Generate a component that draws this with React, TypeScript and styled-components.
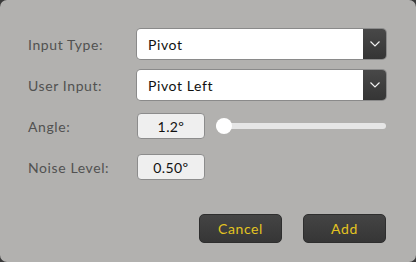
import styled, { createGlobalStyle } from "styled-components";

const GlobalStyle = createGlobalStyle`
    html, body {
        margin: 0;
        padding: 0;
        background: #3a3a3a;
    }
    body {
        font-family: "Lato", "Liberation Sans", sans-serif;
    }
`;

const Dialog = styled.div`
    width: 416px;
    height: 262px;
    box-sizing: border-box;
    background: #b2b1af;
    border-radius: 7px;
    padding: 29px 30px 19px 28px;
    display: flex;
    flex-direction: column;
`;

const Form = styled.div`
    display: flex;
    flex-direction: column;
    gap: 11px;
`;

const Row = styled.div`
    display: flex;
    align-items: center;
    height: 30px;
`;

const Label = styled.span`
    width: 109px;
    flex-shrink: 0;
    font-size: 14px;
    color: #515151;
    letter-spacing: 0.6px;
`;

const Select = styled.div`
    flex: 1;
    height: 30px;
    display: flex;
    box-sizing: border-box;
    border-radius: 4px;
    overflow: hidden;
    box-shadow: 0 0 0 1px #8a8a8a;
`;

const SelectValue = styled.div`
    flex: 1;
    background: #ffffff;
    display: flex;
    align-items: center;
    padding-left: 11px;
    font-size: 14px;
    color: #111;
    letter-spacing: 0.6px;
`;

const SelectButton = styled.div`
    width: 23px;
    background: linear-gradient(#484848, #353535);
    display: flex;
    align-items: center;
    justify-content: center;
`;

const NumberBox = styled.div`
    width: 68px;
    height: 26px;
    box-sizing: border-box;
    background: #efefef;
    border: 1px solid #8c8c8c;
    border-radius: 4px;
    display: flex;
    align-items: center;
    justify-content: center;
    font-size: 14px;
    color: #111;
    letter-spacing: 0.4px;
`;

const Slider = styled.div`
    flex: 1;
    margin-left: 11px;
    height: 20px;
    position: relative;
    display: flex;
    align-items: center;
`;

const Track = styled.div`
    flex: 1;
    height: 6px;
    background: #e6e6e6;
    border-radius: 3px;
`;

const Thumb = styled.div`
    position: absolute;
    left: 0;
    top: 2px;
    width: 16px;
    height: 16px;
    border-radius: 50%;
    background: #ffffff;
`;

const Footer = styled.div`
    margin-top: auto;
    display: flex;
    justify-content: flex-end;
    gap: 21px;
`;

const Button = styled.button`
    width: 83px;
    height: 29px;
    border: 1px solid #2e2e2e;
    border-radius: 5px;
    background: linear-gradient(#444444, #363636);
    color: #e3c421;
    font-family: inherit;
    font-size: 14px;
    letter-spacing: 0.6px;
    padding: 0;
`;

function Chevron() {
    return (
        <svg width="12" height="8" viewBox="0 0 12 8">
            <path d="M1.5 1.5 L6 6 L10.5 1.5" fill="none" stroke="#f0f0f0" strokeWidth="1.2" />
        </svg>
    );
}

export default function App() {
    return (
        <>
            <GlobalStyle />
            <Dialog>
                <Form>
                    <Row>
                        <Label>Input Type:</Label>
                        <Select>
                            <SelectValue>Pivot</SelectValue>
                            <SelectButton><Chevron /></SelectButton>
                        </Select>
                    </Row>
                    <Row>
                        <Label>User Input:</Label>
                        <Select>
                            <SelectValue>Pivot Left</SelectValue>
                            <SelectButton><Chevron /></SelectButton>
                        </Select>
                    </Row>
                    <Row>
                        <Label>Angle:</Label>
                        <NumberBox>1.2º</NumberBox>
                        <Slider>
                            <Track />
                            <Thumb />
                        </Slider>
                    </Row>
                    <Row>
                        <Label>Noise Level:</Label>
                        <NumberBox>0.50º</NumberBox>
                    </Row>
                </Form>
                <Footer>
                    <Button>Cancel</Button>
                    <Button>Add</Button>
                </Footer>
            </Dialog>
        </>
    );
}
